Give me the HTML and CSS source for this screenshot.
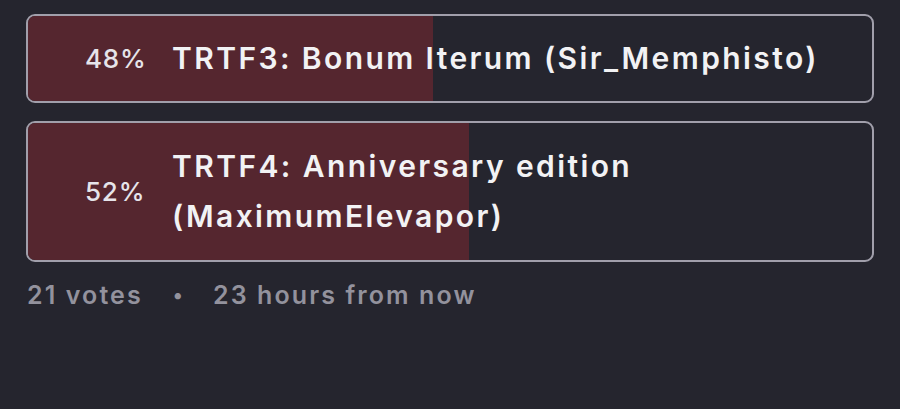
FILE: index.html
```html
<!DOCTYPE html>
<html lang="en">
<head>
  <meta charset="UTF-8">
  <title>Poll results</title>
  <link rel="stylesheet" href="styles.css">
</head>
<body>
  <div class="poll">
    <div class="answer">
      <div class="fill" style="width: 48%"></div>
      <span class="percent">48%</span>
      <span class="label">TRTF3: Bonum Iterum (Sir_Memphisto)</span>
    </div>
    <div class="answer">
      <div class="fill" style="width: 52.3%"></div>
      <span class="percent">52%</span>
      <span class="label">TRTF4: Anniversary edition (MaximumElevapor)</span>
    </div>
    <div class="footer">
      <span>21 votes</span>
      <span class="dot">•</span>
      <span>23 hours from now</span>
    </div>
  </div>
</body>
</html>
```

FILE: styles.css
```css
body {
  margin: 0;
  background: #25252e;
  font-family: 'Inter', 'Open Sans', sans-serif;
  color: #f2f2f4;
}

.poll {
  padding: 14px 26px 0 26px;
  display: flex;
  flex-direction: column;
  gap: 18px;
}

.answer {
  position: relative;
  display: flex;
  align-items: center;
  border: 2px solid #a19fab;
  border-radius: 9px;
  padding: 17px 24px 18px 57px;
  overflow: hidden;
}

.answer + .answer {
  padding-top: 18px;
  padding-bottom: 19px;
}

.fill {
  position: absolute;
  top: 0;
  bottom: 0;
  left: 0;
  background: #55262f;
}

.percent {
  position: relative;
  width: 60px;
  flex-shrink: 0;
  margin-right: 27px;
  font-size: 26px;
  font-weight: 500;
  letter-spacing: 0.8px;
  color: #e6e4ea;
}

.label {
  position: relative;
  font-size: 30px;
  font-weight: 600;
  line-height: 50px;
  letter-spacing: 2.4px;
}

.footer {
  margin-top: 0;
  padding-left: 1px;
  display: flex;
  align-items: center;
  font-size: 25px;
  font-weight: 600;
  letter-spacing: 2.1px;
  color: #93929d;
}

.dot {
  margin: 0 28px 0 30px;
  font-size: 20px;
}
```
